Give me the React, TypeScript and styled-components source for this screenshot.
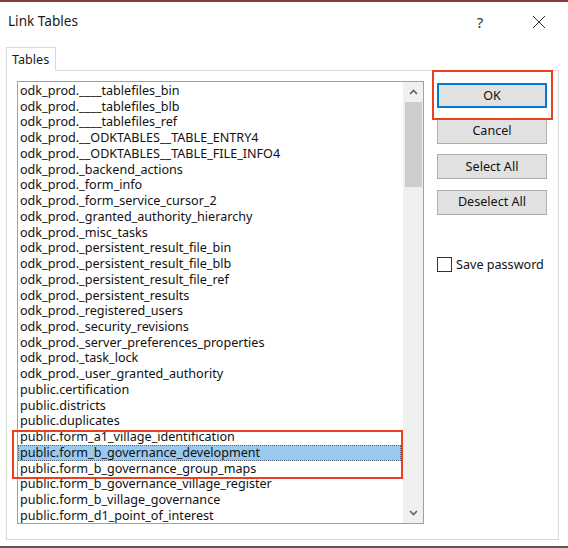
import React from "react";
import styled, { createGlobalStyle } from "styled-components";

const Global = createGlobalStyle`
  html, body { margin: 0; padding: 0; background: #ffffff; }
  body { width: 568px; height: 548px; overflow: hidden; font-family: "Noto Sans", "Open Sans", sans-serif; }
  #root { width: 568px; height: 548px; }
`;

const Window = styled.div`
  position: relative;
  width: 568px;
  height: 548px;
  box-sizing: border-box;
  border-top: 2px solid #8e3a3a;
  border-bottom: 2px solid #5a5a5a;
  background: #ffffff;
  display: flex;
  flex-direction: column;
`;

const TitleBar = styled.div`
  height: 45px;
  flex: none;
  display: flex;
  align-items: flex-start;
  padding: 10px 0 0 8px;
  box-sizing: border-box;
`;

const Title = styled.div`
  flex: 1;
  font-size: 13.6px;
  color: #1a1a1a;
  line-height: 18px;
`;

const TitleButton = styled.div<{ $w: number }>`
  width: ${(p) => p.$w}px;
  height: 20px;
  display: flex;
  align-items: center;
  justify-content: center;
  color: #333;
  font-size: 15px;
`;

const Body = styled.div`
  flex: 1;
  display: flex;
  flex-direction: column;
  padding: 0 9px 7px 6px;
`;

const TabStrip = styled.div`
  display: flex;
  height: 23px;
  flex: none;
`;

const Tab = styled.div`
  width: 50px;
  box-sizing: border-box;
  border: 1px solid #d9d9d9;
  border-bottom: none;
  background: #ffffff;
  font-size: 12.6px;
  color: #1a1a1a;
  padding: 3px 0 0 5px;
  position: relative;
  z-index: 1;
  margin-bottom: -1px;
`;

const Panel = styled.div`
  flex: 1;
  border: 1px solid #d9d9d9;
  display: flex;
  padding: 10px 10px 15px 10px;
  gap: 13px;
  box-sizing: border-box;
`;

const ListBox = styled.div`
  width: 407px;
  height: 443px;
  box-sizing: border-box;
  border: 1px solid #a0a0a0;
  display: flex;
  background: #fff;
`;

const Rows = styled.div`
  flex: 1;
  padding: 1px 0 0 0;
  overflow: hidden;
`;

const Row = styled.div<{ $selected?: boolean }>`
  height: 15.74px;
  line-height: 15.74px;
  font-size: 12.6px;
  color: #111;
  padding-left: 2px;
  margin-right: 2px;
  white-space: nowrap;
  box-sizing: border-box;
  background: ${(p) => (p.$selected ? "#99c9ef" : "transparent")};
  outline: ${(p) => (p.$selected ? "1px dotted #5a6a7a" : "none")};
  outline-offset: -1px;
`;

const ScrollBar = styled.div`
  width: 20px;
  background: #f0f0f0;
  display: flex;
  flex-direction: column;
  align-items: center;
`;

const Arrow = styled.div`
  height: 20px;
  width: 100%;
  display: flex;
  align-items: center;
  justify-content: center;
`;

const Thumb = styled.div`
  width: 17px;
  height: 85px;
  background: #cdcdcd;
`;

const Track = styled.div`
  flex: 1;
`;

const Side = styled.div`
  display: flex;
  flex-direction: column;
  padding-top: 2px;
  width: 110px;
`;

const Button = styled.button<{ $default?: boolean }>`
  width: 110px;
  height: 25px;
  box-sizing: border-box;
  background: #e1e1e1;
  border: ${(p) => (p.$default ? "2px solid #0078d7" : "1px solid #adadad")};
  font-family: "Noto Sans", "Open Sans", sans-serif;
  font-size: 12.6px;
  color: #111;
  padding: 0 0 1px 0;
  margin-bottom: 10.5px;
`;

const CheckRow = styled.label`
  display: flex;
  align-items: center;
  gap: 4px;
  margin-top: 31px;
  font-size: 12.6px;
  color: #111;
`;

const CheckBox = styled.span`
  width: 15px;
  height: 15px;
  box-sizing: border-box;
  border: 1px solid #333;
  background: #fff;
`;

const Annotation = styled.div<{ $x: number; $y: number; $w: number; $h: number }>`
  position: absolute;
  left: ${(p) => p.$x}px;
  top: ${(p) => p.$y}px;
  width: ${(p) => p.$w}px;
  height: ${(p) => p.$h}px;
  box-sizing: border-box;
  border: 2px solid #ea4020;
  pointer-events: none;
`;

const rows = [
  "odk_prod.____tablefiles_bin",
  "odk_prod.____tablefiles_blb",
  "odk_prod.____tablefiles_ref",
  "odk_prod.__ODKTABLES__TABLE_ENTRY4",
  "odk_prod.__ODKTABLES__TABLE_FILE_INFO4",
  "odk_prod._backend_actions",
  "odk_prod._form_info",
  "odk_prod._form_service_cursor_2",
  "odk_prod._granted_authority_hierarchy",
  "odk_prod._misc_tasks",
  "odk_prod._persistent_result_file_bin",
  "odk_prod._persistent_result_file_blb",
  "odk_prod._persistent_result_file_ref",
  "odk_prod._persistent_results",
  "odk_prod._registered_users",
  "odk_prod._security_revisions",
  "odk_prod._server_preferences_properties",
  "odk_prod._task_lock",
  "odk_prod._user_granted_authority",
  "public.certification",
  "public.districts",
  "public.duplicates",
  "public.form_a1_village_identification",
  "public.form_b_governance_development",
  "public.form_b_governance_group_maps",
  "public.form_b_governance_village_register",
  "public.form_b_village_governance",
  "public.form_d1_point_of_interest",
];

const Chevron = ({ up }: { up?: boolean }) => (
  <svg width="9" height="6" viewBox="0 0 9 6">
    <path
      d={up ? "M1 5 L4.5 1.5 L8 5" : "M1 1 L4.5 4.5 L8 1"}
      fill="none"
      stroke="#606060"
      strokeWidth="1.6"
    />
  </svg>
);

export default function App() {
  return (
    <>
      <Global />
      <Window>
        <TitleBar>
          <Title>Link Tables</Title>
          <TitleButton $w={60}>?</TitleButton>
          <TitleButton $w={58}>
            <svg width="14" height="14" viewBox="0 0 14 14">
              <path d="M1 1 L13 13 M13 1 L1 13" stroke="#333" strokeWidth="1" />
            </svg>
          </TitleButton>
        </TitleBar>
        <Body>
          <TabStrip>
            <Tab>Tables</Tab>
          </TabStrip>
          <Panel>
            <ListBox>
              <Rows>
                {rows.map((r) => (
                  <Row key={r} $selected={r === "public.form_b_governance_development"}>
                    {r}
                  </Row>
                ))}
              </Rows>
              <ScrollBar>
                <Arrow>
                  <Chevron up />
                </Arrow>
                <Thumb />
                <Track />
                <Arrow>
                  <Chevron />
                </Arrow>
              </ScrollBar>
            </ListBox>
            <Side>
              <Button $default>OK</Button>
              <Button>Cancel</Button>
              <Button>Select All</Button>
              <Button>Deselect All</Button>
              <CheckRow>
                <CheckBox />
                Save password
              </CheckRow>
            </Side>
          </Panel>
        </Body>
        <Annotation $x={432} $y={68} $w={121} $h={50} />
        <Annotation $x={12} $y={428} $w={391} $h={49} />
      </Window>
    </>
  );
}
